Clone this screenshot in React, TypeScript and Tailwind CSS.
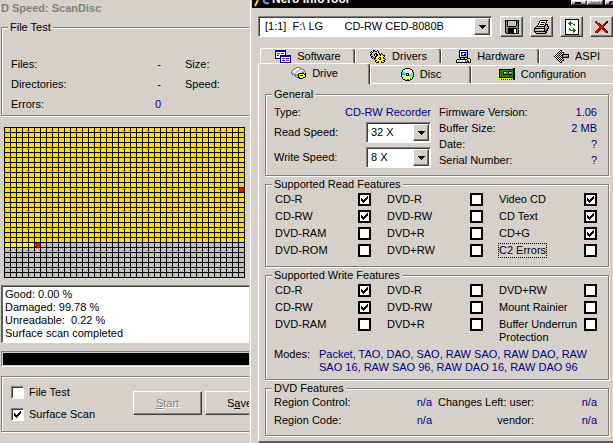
import { useState } from 'react';
import type { ReactNode } from 'react';

const COLORS: Record<string, string> = {
  k: '#000000', w: '#ffffff', g: '#808080', s: '#c0c0c0', y: '#ffff00', o: '#808000',
  r: '#e00000', G: '#008000', L: '#00a000', b: '#000090', B: '#0000ff', c: '#00ffff', d: '#404040',
};

const ICONS: Record<string, string[]> = {
  software: [
    'bbbbbbbbbbb', 'bbbbbbbbbbb', 'bwwwwwwwwwb', 'bwrrrwGGGwb', 'bwwwwwwwwwb',
    'bwBBwbbbbbbbbbbb', 'bwwwwbbbbbbbbbbb', 'bwwwwbwwwwwwwwwb', 'bbbbbbwrrrwBBBwb',
    '     bwwwwwwwwwb', '     bwBBBwrrrwb', '     bwwwwwwwwwb', '     bbbbbbbbbbb',
  ],
  drivers: [
    '   kk  k', ' k kskksk', 'ksksssssk', ' kssskkssk k', 'kkssk kkskksk',
    'ksssk kkyykyykk', ' kksskkyyyyyyyk', ' kskskyyykkyyk', '  k kkyyk kyykk', '    kyyyykkyyyyk',
    '     kkyyyyyykk', '     kyykyykyyk', '      kkkyykkk', '         kk',
  ],
  hardware: [
    '   kkkkkkkkk', '   kwwwwwwsk', '   kwBBBBBsk', '   kwBcwcBsk', '   kwBwcBBsk',
    '   kwBBBBBsk', '   kwsssssgk', '   kkkkkkkkk', '    kssgk  kkk', ' kkkkkkkkkk  wk',
    'kwwswwswwgsk wk', 'kwswwswwsgggkwk', 'kkkkkkkkkkkkkkk',
  ],
  aspi: [
    '      kk', '     kwk', '    kwk kk', '   kwk kwk', '  kwk kwkkkkkkk', ' kwk kwkkgssssk',
    'kwk kwk kgggggk', ' kwk kwkkkkkkkk', '  kwk kwk', '   kwk kwk', '    kwk kk', '     kwk', '      kk',
  ],
  drive: [
    '     gggg', '   ggswwsgg', '  gswwwwsssgg', ' gswwwsssswwsg', 'gswwwssswwsssg',
    'gsswssswwssggsg', 'ggsssswgkkkkksk', ' ggggsgkyyyyykk', '   ggsgkykkkyyk', '    ggskyywyyyk',
    '      gkkyyykk', '        kkkk',
  ],
  disc: [
    '    kkkkk', '  kkwwyyykk', ' kwwwwyyywwk', ' kcwwwyywwwk', 'kcccwwywwwwsk', 'kcccckkkwwssk',
    'kLLcckwkccssk', 'kwwwwkkkcccck', 'kwwwwywwyyyck', ' kwwyywwwyyk', ' kwyyywwwLwk', '  kkyyLLwkk', '    kkkkk',
  ],
  card: [
    '              kk', 'kkkkkkkkkkkkkkkk', 'kLLLLLLLLLLLLLkk', 'krrLkkkkLkkkkLkk', 'krrLkssgLkssgLkk',
    'kLLLksggLksggLkk', 'kLLLkkkkLkkkkLkk', 'kGGLLLLLLLLLLGkk', 'kGGGGGGGGGGGGGkk', 'kkkkkkkkkkkkkkkk',
    ' yyyyyyyyyyyy kk', ' ykykykykykyk kk',
  ],
  printer: [
    '      kkkkkkkk', '     kwwwwwwk', '     kwkkkkwk', '    kwwwwwwk', '    kwkkkkwkkk',
    '   kwwwwwwkksk', '  kkkkkkkkksskk', ' kssssssssksgsk', 'kkkkkkkkkkkgskk', 'kssssssyyskggk',
    'kssssssssskgkk', 'kkkkkkkkkkkkk', ' kssssssssskk', '  kkkkkkkkkk',
  ],
  refresh: [
    'kkkkkkkkkkkkkk', 'kwwwwwwwwwwwwk', 'kwwwwGwwwwwwwk', 'kwwwGGwwwwwwwk', 'kwwGGGGGwwwwwk',
    'kwwwGGwwGGwwwk', 'kwwwwGwwwGwwwk', 'kwwwwwwwwwwwwk', 'kwwwwwwwwwwwwk', 'kwwwGwwwGwwwwk',
    'kwwwGGwwGGwwwk', 'kwwwwGGGGGGwwk', 'kwwwwwwwGGwwwk', 'kwwwwwwwGwwwwk', 'kwwwwwwwwwwwwk', 'kkkkkkkkkkkkkk',
  ],
  floppy: [
    'kkkkkkkkkkkkkk', 'kgksssssssskgk', 'kgksssssssskkk', 'kgksssssssskgk', 'kgksssssssskgk',
    'kgksssssssskgk', 'kggkkkkkkkkggk', 'kggggggggggggk', 'kggkkkkkkkkkgk', 'kggkkkkkkwwkgk',
    'kggkkkkkkwwkgk', 'kggkkkkkkwwkgk', 'kggkkkkkkwwkgk', ' kkkkkkkkkkkkk',
  ],
  close: [
    'rr         rk', 'rrr       rrk', ' rrrk    rrk', '  rrrk  rrk', '   rrrkrrk', '    rrrrk',
    '    rrrrk', '   rrrrrrk', '  rrrk rrrk', ' rrrk   rrrk', 'rrrk     rrrk', 'rrk       rrk',
  ],
};

function Icon({ name }: { name: string }) {
  const rows = ICONS[name];
  const w = Math.max(...rows.map(r => r.length));
  return (
    <svg width={w} height={rows.length} shapeRendering="crispEdges" className="shrink-0" aria-hidden="true">
      {rows.flatMap((row, y) => [...row].map((ch, x) =>
        ch === ' ' ? null : <rect key={`${x}-${y}`} x={x} y={y} width="1" height="1" fill={COLORS[ch]} />
      ))}
    </svg>
  );
}

const etched = 'border border-[#808080] shadow-[1px_1px_0_#fff,inset_1px_1px_0_#fff]';
const raised = 'border border-t-white border-l-white border-r-[#404040] border-b-[#404040] shadow-[inset_-1px_-1px_0_#808080] bg-[#d5d1ca]';
const sunken = 'border border-t-[#808080] border-l-[#808080] border-r-white border-b-white shadow-[inset_1px_1px_0_#404040] bg-white';

function Group({ title, children }: { title: string; children: ReactNode }) {
  return (
    <fieldset className={`min-w-0 ${etched}`}>
      <legend className="ml-[6px] bg-[#d5d1ca] px-[2px]">{title}</legend>
      {children}
    </fieldset>
  );
}

function Check({ label, on = false, flat = false, focus = false }: { label: string; on?: boolean; flat?: boolean; focus?: boolean }) {
  const [checked, setChecked] = useState(on);
  return (
    <label className={flat ? 'flex min-h-[17px] items-start justify-between pt-[2px]' : 'flex flex-row-reverse items-center justify-end gap-[5px]'}>
      <span className={focus ? 'outline-1 outline-dotted outline-black' : 'max-w-[80px]'}>{label}</span>
      <span className="relative block size-[13px] shrink-0">
        <input
          type="checkbox"
          checked={checked}
          onChange={e => setChecked(e.target.checked)}
          className={`block size-[13px] appearance-none ${flat ? 'border-2 border-black bg-white' : sunken}`}
        />
        {checked && (
          <svg viewBox="0 0 13 13" shapeRendering="crispEdges" className="pointer-events-none absolute inset-0">
            <path d="M3 5h1v1h1v1h1v-1h1v-1h1v-1h1v-1h1v3h-1v1h-1v1h-1v1h-1v1h-1v-1h-1v-1h-1z" fill="#000" />
          </svg>
        )}
      </span>
    </label>
  );
}

function Combo({ id, value, className }: { id: string; value: string; className: string }) {
  return (
    <div className={`relative h-[21px] ${className}`}>
      <select id={id} aria-label={id} className={`h-[21px] w-full appearance-none ${sunken}`}>
        <option>{value}</option>
      </select>
      <span className={`pointer-events-none absolute top-[2px] right-[2px] flex h-[17px] w-[16px] items-center justify-center ${raised}`}>
        <svg width="7" height="4" shapeRendering="crispEdges"><path d="M0 0h7v1h-1v1h-1v1h-1v1h-1v-1h-1v-1h-1v-1h-1z" /></svg>
      </span>
    </div>
  );
}

// 40 x 30 blocks, 6x5 pitch
function ScanMap() {
  const cells = [];
  for (let y = 0; y < 30; y++) {
    for (let x = 0; x < 40; x++) {
      let fill = y < 23 ? '#ffdc00' : '#c0c0c0';
      if (y === 23 && x < 5) fill = '#ffff00';
      if ((y === 23 && x === 5) || (y === 12 && x === 39)) fill = '#ff0000';
      cells.push(<rect key={`${x}-${y}`} x={x * 6 + 1} y={y * 5 + 1} width="5" height="4" fill={fill} />);
    }
  }
  return (
    <svg width="241" height="151" shapeRendering="crispEdges" className="mt-[11px] ml-[3px] shrink-0">
      <rect width="241" height="151" fill="#000" />
      {cells}
    </svg>
  );
}

function ScanDisc() {
  return (
    <section className="w-[249px] shrink-0 overflow-hidden pl-[1px]">
      <h1 className="mb-[5px] h-[16px] leading-[16px] font-bold text-[#808080]">D Speed: ScanDisc</h1>
      <fieldset className={`border-r-0 ${etched}`}>
        <legend className="ml-[6px] bg-[#d5d1ca] px-[2px]">File Test</legend>
        <div className="grid grid-cols-[100px_50px_1fr] pt-[20px] pb-[1px] pl-[9px] leading-[20px]">
          <span>Files:</span><span className="text-right text-[#000080]">-</span><span className="pl-6">Size:</span>
          <span>Directories:</span><span className="text-right text-[#000080]">-</span><span className="pl-6">Speed:</span>
          <span>Errors:</span><span className="text-right text-[#000080]">0</span>
        </div>
      </fieldset>
      <ScanMap />
      <div className="mt-[7px] border-y border-l-2 border-t-[#808080] border-b-white border-l-[#606060] bg-white py-[2px] pl-[2px] shadow-[inset_0_1px_0_#404040]">
        <p>Good: 0.00 %</p>
        <p>Damaged: 99.78 %</p>
        <p>Unreadable:&nbsp; 0.22 %</p>
        <p>Surface scan completed</p>
      </div>
      <div role="progressbar" aria-valuenow={100} className="mt-[8px] h-[16px] border-y border-l border-t-[#808080] border-b-white border-l-[#808080] p-px pr-0">
        <div className="h-full bg-black" />
      </div>
      <div className={`mt-[9px] flex border-r-0 pl-[9px] ${etched}`}>
        <div className="flex w-[122px] shrink-0 flex-col gap-[9px] pt-[9px] pb-[10px]">
          <Check label="File Test" />
          <Check label="Surface Scan" on />
        </div>
        <div className="flex gap-[3px] pt-[14px]">
          <button disabled className={`h-[24px] w-[69px] shrink-0 text-[#808080] [text-shadow:1px_1px_0_#fff] ${raised}`}><u>S</u>tart</button>
          <button className={`h-[24px] w-[69px] shrink-0 ${raised}`}>S<u>a</u>ve</button>
        </div>
      </div>
    </section>
  );
}

function Tab({ icon, label, className }: { icon: string; label: string; className: string }) {
  return (
    <button role="tab" className={`flex justify-center gap-[6px] rounded-t-[2px] border-t border-l border-white ${className}`}>
      <Icon name={icon} />
      <span>{label}</span>
    </button>
  );
}

function Info({ label, value }: { label: string; value: string }) {
  return (
    <div className="flex h-[16px] items-center justify-between">
      <span>{label}</span><span className="text-[#000080]">{value}</span>
    </div>
  );
}

const edge = 'shadow-[inset_-1px_0_0_#404040,inset_-2px_0_0_#808080]';

function InfoTool() {
  return (
    <section className="min-w-0 flex-1 overflow-hidden border-l border-white pl-[1px]">
      <header className="flex h-[8px] items-end overflow-hidden bg-black">
        <svg width="20" height="8" className="shrink-0">
          <path d="M3 6L6 0" stroke="#ffe000" strokeWidth="2" />
          <path d="M12 0Q11 4 17 3" stroke="#9090d0" strokeWidth="2" fill="none" />
        </svg>
        <h2 className="flex-1 pb-[2px] text-[12px] leading-[13px] font-bold whitespace-nowrap text-white">Nero InfoTool</h2>
        <div className="flex h-full items-start">
          <button aria-label="Minimize" className={`flex h-[5px] w-[16px] items-start pt-px pl-[3px] ${raised}`}><span className="h-[2px] w-[6px] bg-black" /></button>
          <button aria-label="Maximize" className={`flex h-[5px] w-[16px] items-start justify-center ${raised}`}><span className="h-[2px] w-[9px] border-x border-b border-[#808080]" /></button>
          <button aria-label="Close" className={`ml-[2px] flex h-[5px] w-[8px] items-start border-r-0 pl-[3px] ${raised}`}>
            <svg width="4" height="3"><path d="M0 3L3 0" stroke="#000" strokeWidth="2" /></svg>
          </button>
        </div>
      </header>
      <div className="flex pt-[8px] pl-[6px]">
        <Combo id="Device" value={'[1:1]\u00a0 F:\\ LG' + '\u00a0'.repeat(7) + 'CD-RW CED-8080B'} className="mr-[8px] w-[234px] shrink-0 [&_select]:pl-[6px]" />
        <div className="flex gap-[7px]">
          {['floppy', 'printer', 'refresh', 'close'].map(n => (
            <button key={n} aria-label={n} className={`flex h-[21px] w-[23px] shrink-0 items-center justify-center ${raised}`}>
              <Icon name={n} />
            </button>
          ))}
        </div>
      </div>
      <nav role="tablist" className="mt-[11px] pl-[6px]">
        <div className="flex h-[15px] overflow-hidden pl-[2px]">
          <Tab icon="software" label="Software" className={`w-[95px] shrink-0 pt-px ${edge}`} />
          <Tab icon="drivers" label="Drivers" className={`w-[86px] shrink-0 pt-px ${edge}`} />
          <Tab icon="hardware" label="Hardware" className={`w-[98px] shrink-0 pt-px ${edge}`} />
          <Tab icon="aspi" label="ASPI" className="w-[75px] shrink-0 pt-px" />
        </div>
        <div className="flex h-[21px] items-end">
          <Tab icon="drive" label="Drive" className={`h-[21px] w-[112px] shrink-0 pt-[3px] ${edge}`} />
          <Tab icon="disc" label="Disc" className={`h-[19px] w-[101px] shrink-0 border-b pt-[2px] ${edge}`} />
          <Tab icon="card" label="Configuration" className="h-[19px] flex-1 border-b pt-[2px]" />
        </div>
      </nav>
      <main className="ml-[6px] grid gap-[2px] border-b-2 border-l border-b-[#606060] border-l-white pt-[4px] pr-[4px] pb-[5px] pl-[6px]">
        <Group title="General">
          <div className="grid grid-cols-[157px_1fr] gap-x-[8px] pr-[11px] pb-[7px] pl-[8px]">
            <div className="pt-[3px]">
              <Info label="Type:" value="CD-RW Recorder" />
              <div className="mt-[2px] mb-[4px] flex items-center justify-between">
                <label htmlFor="ReadSpeed">Read Speed:</label>
                <Combo id="ReadSpeed" value="32 X" className="w-[65px] [&_select]:pl-[4px]" />
              </div>
              <div className="flex items-center justify-between">
                <label htmlFor="WriteSpeed">Write Speed:</label>
                <Combo id="WriteSpeed" value="8 X" className="w-[65px] [&_select]:pl-[4px]" />
              </div>
            </div>
            <div className="pt-[3px]">
              <Info label="Firmware Version:" value="1.06" />
              <Info label="Buffer Size:" value="2 MB" />
              <Info label="Date:" value="?" />
              <Info label="Serial Number:" value="?" />
            </div>
          </div>
        </Group>
        <Group title="Supported Read Features">
          <div className="grid grid-cols-[96px_96px_1fr] gap-x-4 pr-[11px] pb-[7px] pl-[9px]">
            <Check flat label="CD-R" on /><Check flat label="DVD-R" /><Check flat label="Video CD" on />
            <Check flat label="CD-RW" on /><Check flat label="DVD-RW" /><Check flat label="CD Text" on />
            <Check flat label="DVD-RAM" /><Check flat label="DVD+R" /><Check flat label="CD+G" on />
            <Check flat label="DVD-ROM" /><Check flat label="DVD+RW" /><Check flat label="C2 Errors" focus />
          </div>
        </Group>
        <Group title="Supported Write Features">
          <div className="grid grid-cols-[96px_96px_1fr] gap-x-4 pr-[11px] pl-[9px]">
            <Check flat label="CD-R" on /><Check flat label="DVD-R" /><Check flat label="DVD+RW" />
            <Check flat label="CD-RW" on /><Check flat label="DVD-RW" /><Check flat label="Mount Rainier" />
            <Check flat label="DVD-RAM" /><Check flat label="DVD+R" /><Check flat label="Buffer Underrun Protection" />
          </div>
          <div className="flex pt-[4px] pb-[5px] pl-[8px]">
            <span className="w-[45px] shrink-0">Modes:</span>
            <p className="whitespace-nowrap text-[#000080]">
              Packet, TAO, DAO, SAO, RAW SAO, RAW DAO, RAW<br />
              SAO 16, RAW SAO 96, RAW DAO 16, RAW DAO 96
            </p>
          </div>
        </Group>
        <Group title="DVD Features">
          <div className="grid grid-cols-[158px_102px_1fr] gap-y-[4px] pr-[11px] pb-[8px] pl-[8px] leading-[14px]">
            <div className="flex justify-between"><span>Region Control:</span><span className="text-[#000080]">n/a</span></div>
            <span className="text-right">Changes Left: user:</span>
            <span className="text-right text-[#000080]">n/a</span>
            <div className="flex justify-between"><span>Region Code:</span><span className="text-[#000080]">n/a</span></div>
            <span className="text-right">vendor:</span>
            <span className="text-right text-[#000080]">n/a</span>
          </div>
        </Group>
      </main>
    </section>
  );
}

export default function App() {
  return (
    <div className="flex h-screen gap-[1px] overflow-hidden bg-[#d5d1ca] font-['Liberation_Sans',Arial,sans-serif] text-[11px] leading-[13px] text-black">
      <ScanDisc />
      <InfoTool />
    </div>
  );
}
